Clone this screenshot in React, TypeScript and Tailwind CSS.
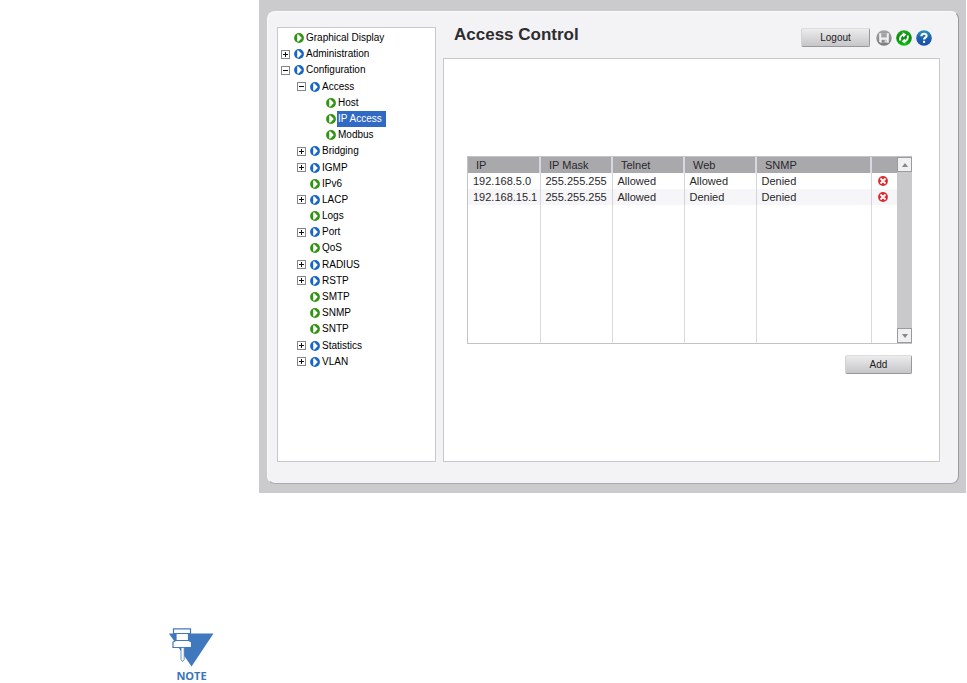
import React, { useState } from 'react';

type TreeItem = {
  label: string;
  level: 0 | 1 | 2;
  group?: 'open' | 'closed';
};

type Rule = {
  ip: string;
  mask: string;
  telnet: string;
  web: string;
  snmp: string;
};

const treeItems: TreeItem[] = [
  { label: 'Graphical Display', level: 0 },
  { label: 'Administration', level: 0, group: 'closed' },
  { label: 'Configuration', level: 0, group: 'open' },
  { label: 'Access', level: 1, group: 'open' },
  { label: 'Host', level: 2 },
  { label: 'IP Access', level: 2 },
  { label: 'Modbus', level: 2 },
  { label: 'Bridging', level: 1, group: 'closed' },
  { label: 'IGMP', level: 1, group: 'closed' },
  { label: 'IPv6', level: 1 },
  { label: 'LACP', level: 1, group: 'closed' },
  { label: 'Logs', level: 1 },
  { label: 'Port', level: 1, group: 'closed' },
  { label: 'QoS', level: 1 },
  { label: 'RADIUS', level: 1, group: 'closed' },
  { label: 'RSTP', level: 1, group: 'closed' },
  { label: 'SMTP', level: 1 },
  { label: 'SNMP', level: 1 },
  { label: 'SNTP', level: 1 },
  { label: 'Statistics', level: 1, group: 'closed' },
  { label: 'VLAN', level: 1, group: 'closed' },
];

const initialRules: Rule[] = [
  { ip: '192.168.5.0', mask: '255.255.255', telnet: 'Allowed', web: 'Allowed', snmp: 'Denied' },
  { ip: '192.168.15.1', mask: '255.255.255', telnet: 'Allowed', web: 'Denied', snmp: 'Denied' },
];

const indents = ['pl-[3px]', 'pl-[19px]', 'pl-[35px]'];

const Bullet: React.FC<{ color: string }> = ({ color }) => (
  <svg width="10" height="10" viewBox="0 0 10 10" className="shrink-0" aria-hidden="true">
    <circle cx="5" cy="5" r="4.9" fill={color} />
    <path d="M3.2 1.5 4.6 1.6 7.8 5 4.6 8.4 3.2 8.5Z" fill="#fff" />
  </svg>
);

const Toggle: React.FC<{ open: boolean; label: string }> = ({ open, label }) => (
  <button type="button" aria-label={label} aria-expanded={open} className="w-[9px] h-[9px] shrink-0">
    <svg width="9" height="9" viewBox="0 0 9 9" className="block" shapeRendering="crispEdges">
      <rect x="0.5" y="0.5" width="8" height="8" fill="#fff" stroke="#85858c" />
      <path d="M2 4.5h5" stroke="#111" />
      {!open && <path d="M4.5 2v5" stroke="#111" />}
    </svg>
  </button>
);

const SaveIcon = () => (
  <svg width="16" height="16" viewBox="0 0 16 16">
    <defs>
      <linearGradient id="saveFill" x1="0" y1="0" x2="0" y2="1">
        <stop offset="0" stopColor="#a5a4a6" />
        <stop offset="1" stopColor="#7b7a7c" />
      </linearGradient>
    </defs>
    <circle cx="8" cy="8" r="7.7" fill="url(#saveFill)" />
    <path d="M3.2 3.2h9.600v9.600H4.400l-1.200-1.200Z" fill="#f1f1f2" />
    <path d="M5.200 3.200h5.600v4.300H5.200Z" fill="#a3a2a4" />
    <path d="M5.600 9.800h4.800v3H5.600Z" fill="#8a898b" />
    <path d="M8.600 10.300h1.200v2H8.600Z" fill="#f1f1f2" />
  </svg>
);

const RefreshIcon = () => (
  <svg width="16" height="16" viewBox="0 0 16 16">
    <defs>
      <linearGradient id="refreshFill" x1="0" y1="0" x2="0" y2="1">
        <stop offset="0" stopColor="#26a526" />
        <stop offset="0.5" stopColor="#078b0b" />
        <stop offset="1" stopColor="#0cc310" />
      </linearGradient>
    </defs>
    <circle cx="8" cy="8" r="7.8" fill="url(#refreshFill)" />
    <path d="M4.3 10.500C3.600 8 4.800 5.600 7.200 4.900M11.700 5.500C12.400 8 11.200 10.400 8.800 11.100" fill="none" stroke="#fff" strokeWidth="2" />
    <path d="M6.500 2.200 10.400 4.400 7.400 7.600ZM9.500 13.800 5.600 11.600 8.600 8.400Z" fill="#fff" />
  </svg>
);

const HelpIcon = () => (
  <svg width="16" height="16" viewBox="0 0 16 16">
    <defs>
      <linearGradient id="helpFill" x1="0" y1="0" x2="0" y2="1">
        <stop offset="0" stopColor="#2b93bd" />
        <stop offset="0.5" stopColor="#1a61ad" />
        <stop offset="1" stopColor="#1d4fae" />
      </linearGradient>
    </defs>
    <circle cx="8" cy="8" r="7.8" fill="url(#helpFill)" />
    <path d="M5.4 6.2C5.4 2.8 10.8 3 10.6 5.9 10.5 7.6 8 7.6 8 9.6" fill="none" stroke="#fff" strokeWidth="2.1" />
    <path d="M7 10.800h2.100v2.100H7Z" fill="#fff" />
  </svg>
);

const DeleteIcon = () => (
  <svg width="10" height="10" viewBox="0 0 10 10" className="block">
    <circle cx="5" cy="5" r="4.9" fill="#e0262b" />
    <path d="m2.5 2.5 5 5M7.500 2.500l-5 5" stroke="#fff" strokeWidth="1.8" />
  </svg>
);

const NoteIcon = () => (
  <svg width="45" height="40" viewBox="0 0 45 40" aria-hidden="true">
    <path d="M0 5.500h44.500L22.500 38.500Z" fill="#3f78bd" />
    <path d="M4.500 0.800h17v4.700h-2v7l3 1.500v5.500H4V14l3-1.500v-7H4.500Z" fill="#fff" stroke="#3f78bd" strokeWidth="1.200" />
    <path d="M7 5.500h12.500M7 12.500h12.500" stroke="#3f78bd" />
    <path d="M12 19.500h3.200v12l-1.600 2-1.600-2Z" fill="#fff" stroke="#3f78bd" strokeWidth="0.800" />
  </svg>
);

const buttonStyle =
  'h-[19px] text-[10px] leading-4 text-[#222] bg-linear-to-b from-[#ececed] to-[#c6c5c8] border border-t-[#dedde0] border-l-[#d3d2d5] border-b-[#98979a] border-r-[#98979a] rounded-[2px]';

const App: React.FC = () => {
  const [selected, setSelected] = useState('IP Access');
  const [rules, setRules] = useState(initialRules);

  const removeRule = (ip: string) => {
    setRules(rules.filter((rule) => rule.ip !== ip));
  };

  return (
    <div className="min-h-screen bg-white font-['Liberation_Sans',Arial,sans-serif] text-[#1b1b1d]">
      <div className="ml-[259px] mr-px bg-[#cbcacd] pt-[11px] pl-2 pr-[7px] pb-[9px]">
        <div className="flex gap-[7px] bg-[#f3f2f5] rounded-lg border-t border-l border-[#f9f8fa] border-r border-b border-r-[#99989b] border-b-[#aaa9ac] pt-[15px] pr-[18px] pb-[21px] pl-[9px]">
          <nav aria-label="Menu" className="w-[159px] shrink-0 bg-white border border-[#c8c7ca] pt-[2px]">
            <ul className="flex flex-col justify-between h-[340px] text-[10px] leading-4 text-black">
              {treeItems.map((item) => (
                <li key={item.label} className={`flex items-center h-4 ${indents[item.level]}`}>
                  {item.group ? (
                    <Toggle open={item.group === 'open'} label={item.label} />
                  ) : (
                    <span className="w-[9px] shrink-0" />
                  )}
                  <a
                    href="#"
                    onClick={(e) => {
                      e.preventDefault();
                      setSelected(item.label);
                    }}
                    className="flex items-center gap-px pl-1"
                  >
                    <Bullet color={item.group ? '#1766c5' : '#2f9410'} />
                    <span className={selected === item.label ? 'pl-px pr-1 bg-[#316ac5] text-white' : 'px-px'}>{item.label}</span>
                  </a>
                </li>
              ))}
            </ul>
          </nav>

          <main className="flex-1 min-w-0 flex flex-col">
            <header className="flex items-start h-[31px] pl-[11px] pr-2">
              <h1 className="flex-1 text-[17px] leading-4 font-bold text-[#2d2c2f]">Access Control</h1>
              <button type="button" className={`w-[69px] mt-px ${buttonStyle}`}>Logout</button>
              <div className="flex gap-1 ml-[6px] mt-[3px]">
                <button type="button" aria-label="Save"><SaveIcon /></button>
                <button type="button" aria-label="Refresh"><RefreshIcon /></button>
                <button type="button" aria-label="Help"><HelpIcon /></button>
              </div>
            </header>

            <section className="min-h-[404px] bg-white border border-[#c8c7ca] pt-[97px] pr-[27px] pl-[23px]">
              <div className="flex h-[188px] border border-[#c3c2c6] border-r-0">
                <table className="flex-1 h-full table-fixed border-collapse text-[11px] leading-4 text-[#29282b]">
                  <colgroup>
                    <col className="w-[72px]" />
                    <col className="w-[72px]" />
                    <col className="w-[72px]" />
                    <col className="w-[72px]" />
                    <col />
                    <col className="w-[26px]" />
                  </colgroup>
                  <thead>
                    <tr className="h-4 bg-[#a9a8ab] text-left">
                      {['IP', 'IP Mask', 'Telnet', 'Web', 'SNMP'].map((name) => (
                        <th key={name} scope="col" className="h-4 p-0 pl-2 font-normal border-r-2 border-[#d9d7e2]">{name}</th>
                      ))}
                      <th scope="col" aria-label="Delete" className="p-0" />
                    </tr>
                  </thead>
                  <tbody>
                    {rules.map((rule) => (
                      <tr key={rule.ip} className="h-4 even:bg-[#f6f5f8]">
                        {[rule.ip, rule.mask, rule.telnet, rule.web, rule.snmp].map((value, i) => (
                          <td key={i} className="h-4 p-0 pl-[5px] border-r border-[#d6d3e0] whitespace-nowrap">{value}</td>
                        ))}
                        <td className="p-0">
                          <button type="button" aria-label={`Delete ${rule.ip}`} onClick={() => removeRule(rule.ip)} className="block ml-[6px]">
                            <DeleteIcon />
                          </button>
                        </td>
                      </tr>
                    ))}
                    <tr>
                      {[0, 1, 2, 3, 4].map((i) => (
                        <td key={i} className="p-0 border-r border-[#dcd9d6]" />
                      ))}
                      <td className="p-0" />
                    </tr>
                  </tbody>
                </table>
                <div className="w-[15px] shrink-0 flex flex-col justify-between bg-[#c9c8cb]">
                  <button type="button" aria-label="Scroll up" className="h-[15px] flex items-center justify-center bg-[#f0eff1] border border-[#9b9a9d]">
                    <svg width="6" height="4" viewBox="0 0 6 4"><path d="M0 4 3 0l3 4Z" fill="#868588" /></svg>
                  </button>
                  <button type="button" aria-label="Scroll down" className="h-[15px] flex items-center justify-center bg-[#f0eff1] border border-[#9b9a9d]">
                    <svg width="6" height="4" viewBox="0 0 6 4"><path d="M0 0 3 4l3-4Z" fill="#868588" /></svg>
                  </button>
                </div>
              </div>
              <div className="flex justify-end mt-[11px]">
                <button type="button" className={`w-[67px] ${buttonStyle}`}>Add</button>
              </div>
            </section>
          </main>
        </div>
      </div>

      <aside className="mt-[135px] ml-[169px] w-[45px] flex flex-col items-center">
        <NoteIcon />
        <strong className="font-['Open_Sans',sans-serif] text-[11px] leading-4 font-bold text-[#3a74ba]">NOTE</strong>
      </aside>
    </div>
  );
};

export default App;
